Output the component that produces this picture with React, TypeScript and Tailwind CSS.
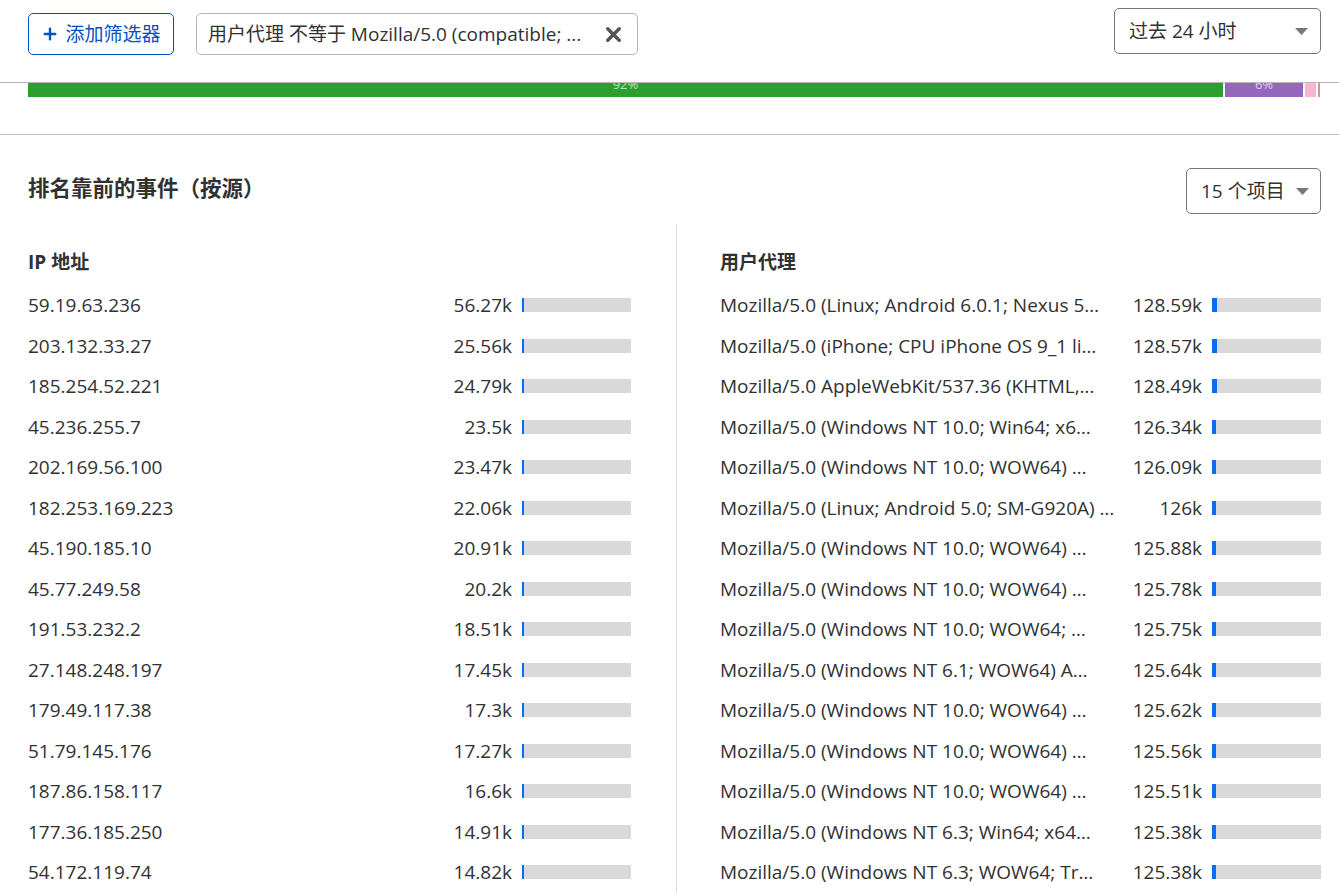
import React from 'react';
import { X, Plus } from 'lucide-react';

const FONT = { fontFamily: '"Open Sans", "Noto Sans CJK SC", sans-serif' };

const segments = [
  { w: 1195, color: 'bg-[#2ca02c]', label: '92%' },
  { w: 78, color: 'bg-[#9467bd]', label: '6%' },
  { w: 11, color: 'bg-[#f7b6d2]', label: '' },
  { w: 2, color: 'bg-[#c49c94]', label: '' },
];

const ipRows: [string, string][] = [
  ['59.19.63.236', '56.27k'],
  ['203.132.33.27', '25.56k'],
  ['185.254.52.221', '24.79k'],
  ['45.236.255.7', '23.5k'],
  ['202.169.56.100', '23.47k'],
  ['182.253.169.223', '22.06k'],
  ['45.190.185.10', '20.91k'],
  ['45.77.249.58', '20.2k'],
  ['191.53.232.2', '18.51k'],
  ['27.148.248.197', '17.45k'],
  ['179.49.117.38', '17.3k'],
  ['51.79.145.176', '17.27k'],
  ['187.86.158.117', '16.6k'],
  ['177.36.185.250', '14.91k'],
  ['54.172.119.74', '14.82k'],
];

// labels as the list shows them (already shortened)
const uaRows: [string, string][] = [
  ['Mozilla/5.0 (Linux; Android 6.0.1; Nexus 5…', '128.59k'],
  ['Mozilla/5.0 (iPhone; CPU iPhone OS 9_1 li…', '128.57k'],
  ['Mozilla/5.0 AppleWebKit/537.36 (KHTML,…', '128.49k'],
  ['Mozilla/5.0 (Windows NT 10.0; Win64; x6…', '126.34k'],
  ['Mozilla/5.0 (Windows NT 10.0; WOW64) …', '126.09k'],
  ['Mozilla/5.0 (Linux; Android 5.0; SM-G920A) …', '126k'],
  ['Mozilla/5.0 (Windows NT 10.0; WOW64) …', '125.88k'],
  ['Mozilla/5.0 (Windows NT 10.0; WOW64) …', '125.78k'],
  ['Mozilla/5.0 (Windows NT 10.0; WOW64; …', '125.75k'],
  ['Mozilla/5.0 (Windows NT 6.1; WOW64) A…', '125.64k'],
  ['Mozilla/5.0 (Windows NT 10.0; WOW64) …', '125.62k'],
  ['Mozilla/5.0 (Windows NT 10.0; WOW64) …', '125.56k'],
  ['Mozilla/5.0 (Windows NT 10.0; WOW64) …', '125.51k'],
  ['Mozilla/5.0 (Windows NT 6.3; Win64; x64…', '125.38k'],
  ['Mozilla/5.0 (Windows NT 6.3; WOW64; Tr…', '125.38k'],
];

const Caret = () => (
  <svg width="13" height="7" viewBox="0 0 13 7" className="shrink-0">
    <path d="M0 0 L13 0 L6.5 7 Z" fill="#777" />
  </svg>
);

const Row = ({ label, value, fill }: { label: string; value: string; fill: number }) => (
  <div className="flex items-center h-[40.5px] text-[19px] text-[#313131]">
    <div className="flex-1 min-w-0 truncate">{label}</div>
    <div className="pl-[20px] text-right shrink-0">{value}</div>
    <div className="ml-[10px] w-[109px] h-[14px] bg-[#d9d9d9] flex shrink-0">
      <div className="h-full bg-[#0a6cf2]" style={{ width: fill }} />
    </div>
  </div>
);

export default function App() {
  return (
    <div className="w-[1339px] h-[894px] overflow-hidden bg-white" style={FONT}>
      {/* top filter bar */}
      <div className="h-[83px] border-b border-[#b6b6b6] flex items-start justify-between pl-[28px] pr-[18px] pt-[8px]">
        <div className="flex items-center gap-[22px] mt-[5px]">
          <button className="h-[42px] w-[146px] rounded-[5px] border border-[#0051c3] text-[#0051c3] text-[19px] flex items-center justify-center gap-[6px]">
            <Plus size={18} strokeWidth={3.2} />
            <span>添加筛选器</span>
          </button>
          <div className="h-[42px] w-[442px] pl-[11px] pr-[12px] rounded-[5px] border border-[#b6b6b6] text-[#313131] text-[19px] flex items-center justify-between">
            <span className="truncate">用户代理 不等于 Mozilla/5.0 (compatible; ...</span>
            <X size={23} strokeWidth={3.6} className="text-[#555] shrink-0 ml-[12px]" />
          </div>
        </div>
        <button className="h-[46px] w-[207px] rounded-[5px] border border-[#777] pl-[14px] pr-[12px] text-[19px] text-[#313131] flex items-center justify-between">
          <span>过去 24 小时</span>
          <Caret />
        </button>
      </div>

      {/* distribution bar */}
      <div className="h-[52px] border-b border-[#c0c0c0] pl-[28px] pr-[18px]">
        <div className="flex gap-[2px] h-[14px]">
          {segments.map((s, i) => (
            <div key={i} className={`${s.color} h-full overflow-hidden flex justify-center`} style={{ width: s.w }}>
              <span className="text-[13px] leading-[14px] -mt-[6px] text-white/70">{s.label}</span>
            </div>
          ))}
        </div>
      </div>

      {/* top events */}
      <div className="pl-[28px] pr-[18px] pt-[33px]">
        <div className="flex items-start justify-between">
          <h2 className="text-[21.5px] font-bold text-[#313131] mt-[4px]">排名靠前的事件（按源）</h2>
          <button className="h-[46px] w-[135px] rounded-[5px] border border-[#777] pl-[14px] pr-[11px] text-[19px] text-[#313131] flex items-center justify-between">
            <span>15 个项目</span>
            <Caret />
          </button>
        </div>

        <div className="grid grid-cols-[648px_minmax(0,1fr)] mt-[11px]">
          <div className="min-w-0 pr-[45px] pt-[24px]">
            <div className="text-[19px] font-bold text-[#313131] h-[27px] leading-[27px] mb-[9px]">IP 地址</div>
            {ipRows.map(([ip, v], i) => (
              <Row key={i} label={ip} value={v} fill={2} />
            ))}
          </div>
          <div className="min-w-0 border-l border-[#d9d9d9] pl-[43px] pt-[24px]">
            <div className="text-[19px] font-bold text-[#313131] h-[27px] leading-[27px] mb-[9px]">用户代理</div>
            {uaRows.map(([ua, v], i) => (
              <Row key={i} label={ua} value={v} fill={i < 3 ? 5 : 4} />
            ))}
          </div>
        </div>
      </div>
    </div>
  );
}
